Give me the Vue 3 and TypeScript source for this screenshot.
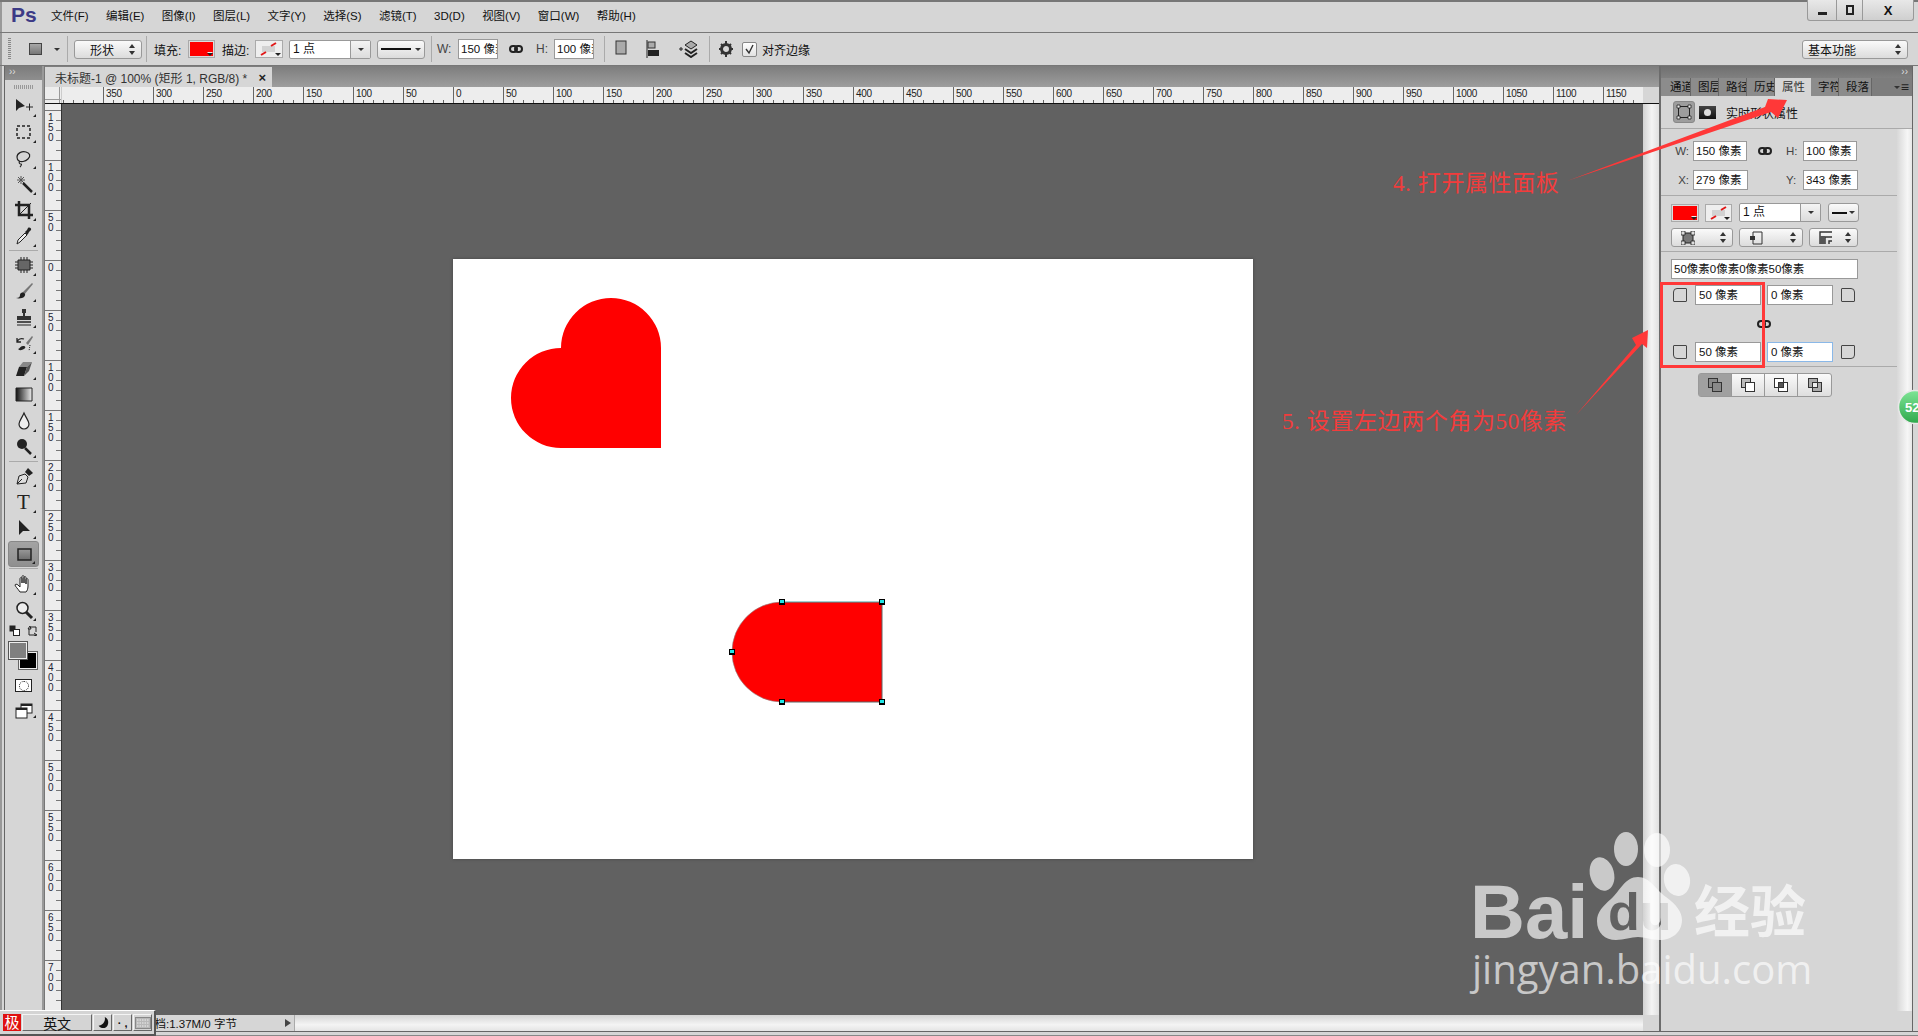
<template>
  <div class="ps">
    <!-- shared icons -->
    <svg class="defs" width="0" height="0">
      <defs>
        <linearGradient id="g-tool" x1="0" x2="1" y1="0" y2="0">
          <stop offset="0" stop-color="#111" />
          <stop offset="1" stop-color="#eee" />
        </linearGradient>
        <linearGradient id="g-shape" x1="0" x2="0" y1="0" y2="1">
          <stop offset="0" stop-color="#9a9a9a" />
          <stop offset="1" stop-color="#6c6c6c" />
        </linearGradient>
        <linearGradient id="g-ball" x1="0" x2="0" y1="0" y2="1">
          <stop offset="0" stop-color="#7fe596" />
          <stop offset="1" stop-color="#2ea84c" />
        </linearGradient>
        <mask id="du-cut">
          <rect x="1580" y="860" width="120" height="90" fill="#fff" />
          <text x="1608" y="930" class="wm-du">du</text>
        </mask>
        <symbol id="i-link" viewBox="0 0 14 10">
          <rect x="1" y="2" width="7" height="6" rx="3" fill="none" stroke="#222" stroke-width="2" />
          <rect x="6" y="2" width="7" height="6" rx="3" fill="none" stroke="#222" stroke-width="2" />
        </symbol>
        <symbol id="i-none" viewBox="0 0 20 14">
          <rect x="3" y="4" width="13" height="6" fill="#d2d2d2" />
          <path d="M2 13l5-3M12 4l5-3" stroke="#e01818" stroke-width="2" />
        </symbol>
      </defs>
    </svg>

    <header class="menubar">
      <span class="logo">Ps</span>
      <nav class="menu">
        <span v-for="m in menus" :key="m" class="menu-item">{{ m }}</span>
      </nav>
      <div class="win-btns">
        <span class="win-btn min"><i /></span>
        <span class="win-btn max"><i /></span>
        <span class="win-btn close">X</span>
      </div>
    </header>

    <div class="options">
      <span class="grip" />
      <span class="preset ml18" />
      <span class="tri ml12" />
      <span class="vsep ml7" />
      <span class="ctl sel ml6 w68"><b class="t-c">形状</b><span class="updown" /></span>
      <span class="vsep ml4" />
      <span class="lbl ml7 w30">填充:</span>
      <span class="swatch ml4 w27"><i class="red" /><span class="tri tiny" /></span>
      <span class="lbl ml7 w30">描边:</span>
      <span class="swatch ml3 w28"><svg class="none-ic"><use href="#i-none" /></svg><span class="tri tiny" /></span>
      <span class="combo ml6 w82"><b>1 点</b><span class="combo-btn"><span class="tri" /></span></span>
      <span class="ctl line-sel ml6 w48"><i class="line" /><span class="tri" /></span>
      <span class="vsep ml6" />
      <span class="lbl gray ml5 w14">W:</span>
      <span class="inp ml7 w40">150 像素</span>
      <svg class="link ml11"><use href="#i-link" /></svg>
      <span class="lbl gray ml13 w13">H:</span>
      <span class="inp ml5 w40">100 像素</span>
      <span class="vsep ml10" />
      <svg class="opt-ic ml10 w12" viewBox="0 0 12 18">
        <rect x="1" y="1" width="10" height="13" fill="#aaa" stroke="#333" />
      </svg>
      <svg class="opt-ic ml19 w15" viewBox="0 0 15 18">
        <path d="M1 0v18" stroke="#222" />
        <rect x="2" y="2" width="7" height="6" fill="#aaa" stroke="#333" />
        <rect x="2" y="10" width="11" height="6" fill="#222" />
      </svg>
      <svg class="opt-ic ml17 w20" viewBox="0 0 20 18">
        <path d="M1 9h4M3 7v4" stroke="#222" />
        <path d="M7 5l6-4 6 4-6 4z" fill="#aaa" stroke="#222" />
        <path d="M7 9l6 4 6-4M7 13l6 4 6-4" fill="none" stroke="#222" stroke-width="2" />
      </svg>
      <span class="vsep ml11" />
      <svg class="opt-ic ml8 w16" viewBox="0 0 16 18">
        <circle cx="8" cy="9" r="4.5" fill="none" stroke="#333" stroke-width="3" />
        <path d="M8 1v3M8 14v3M1 9h3M12 9h3M3 4l2 2M11 12l2 2M13 4l-2 2M5 12l-2 2" stroke="#333" stroke-width="2" />
      </svg>
      <span class="check ml8">
        <svg viewBox="0 0 13 13"><path d="M3 6l3 4 4-8" fill="none" stroke="#333" stroke-width="1.4" /></svg>
      </span>
      <span class="lbl ml5">对齐边缘</span>
      <span class="ctl sel workspace"><b>基本功能</b><span class="updown" /></span>
    </div>

    <main class="workspace-row">
      <div class="gutter" />

      <aside class="toolbar">
        <div class="tb-head"><span>››</span></div>
        <div class="tb-grip" />
        <template v-for="(group, gi) in toolGroups" :key="gi">
          <div v-if="gi > 0" class="tool-sep" :class="{ wide: gi === 3 }" />
          <div
            v-for="t in group"
            :key="t.name"
            class="tool"
            :class="{ active: t.name === 'shape' }"
          >
            <svg viewBox="0 0 20 20" width="20" height="20">
              <text v-if="t.text" x="3" y="17" class="tool-t">{{ t.text }}</text>
              <path
                v-for="(p, i) in t.p"
                :key="i"
                :d="p.d"
                :fill="p.f || 'none'"
                :stroke="p.s || 'none'"
                :stroke-width="p.w || 1"
                :stroke-dasharray="p.da"
              />
            </svg>
            <i class="corner" />
          </div>
        </template>
        <div class="swap-row">
          <svg viewBox="0 0 11 11" width="11" height="11">
            <rect x="0.5" y="0.5" width="6" height="6" fill="#222" />
            <rect x="4.5" y="4.5" width="6" height="6" fill="#fff" stroke="#222" />
          </svg>
          <svg viewBox="0 0 11 11" width="11" height="11">
            <path d="M2 4v6h7M3 1l-2 3h3zM7 8l3 2-3 1M4 2h5v5" fill="none" stroke="#222" />
          </svg>
        </div>
        <div class="colors">
          <span class="bg-c" />
          <span class="fg-c" />
        </div>
        <div class="qmask"><i /></div>
        <div class="screen-mode">
          <svg viewBox="0 0 18 16" width="18" height="16">
            <rect x="6" y="1" width="11" height="9" fill="#fff" stroke="#222" />
            <path d="M6 1h11v2H6z" fill="#222" />
            <rect x="1" y="5" width="11" height="10" fill="#fff" stroke="#222" />
            <path d="M1 5h11v2H1z" fill="#222" />
          </svg>
          <i class="corner" />
        </div>
      </aside>

      <div class="vdivider" />

      <section class="doc">
        <div class="doc-tabs">
          <div class="doc-tab">
            <span>未标题-1 @ 100% (矩形 1, RGB/8) *</span>
            <b>×</b>
          </div>
        </div>
        <div class="ruler-row">
          <div class="ruler-corner" />
          <div class="ruler-h">
            <span v-for="(l, i) in hLabels" :key="i" class="h-label">{{ l }}</span>
          </div>
          <div class="ruler-end" />
        </div>
        <div class="doc-main">
          <div class="ruler-v">
            <span v-for="(l, i) in vLabels" :key="i" class="v-label">{{ l }}</span>
          </div>
          <div class="canvas">
            <div class="sheet">
              <svg width="800" height="600" viewBox="0 0 800 600">
                <path
                  d="M108 89a50 50 0 0 1 50-50a50 50 0 0 1 50 50v100H108a50 50 0 0 1-50-50a50 50 0 0 1 50-50z"
                  fill="#f00"
                />
                <path d="M329 343h100v100H329a50 50 0 0 1 0-100z" fill="#f00" />
                <path d="M329 343h100" fill="none" stroke="#3fa3a3" />
                <path d="M429 343v100H329" fill="none" stroke="#5c6464" />
                <path d="M329 443a50 50 0 0 1 0-100" fill="none" stroke="#8a8a8a" stroke-width="0.6" />
                <g v-for="a in anchors" :key="a.x + '-' + a.y">
                  <rect :x="a.x - 3" :y="a.y - 3" width="6" height="6" fill="#000" />
                  <rect :x="a.x - 2" :y="a.y - 2" width="4" height="3" fill="#1fe6e6" />
                </g>
              </svg>
            </div>
          </div>
          <div class="vscroll" />
        </div>
        <div class="doc-status">
          <div class="status"><span>文档:1.37M/0 字节</span><i /></div>
          <div class="hscroll" />
          <div class="scroll-corner" />
        </div>
      </section>

      <div class="pdivider" />

      <aside class="panel">
        <div class="panel-head"><span>››</span></div>
        <div class="panel-tabs">
          <span v-for="t in tabs" :key="t" class="ptab" :class="{ on: t === '属性', wider: t === '段落' }">{{ t }}</span>
          <span class="ptab-menu"><i class="tri" />≡</span>
        </div>
        <div class="prop-head">
          <span class="prop-btn">
            <svg viewBox="0 0 16 16" width="16" height="16">
              <rect x="2.5" y="2.5" width="11" height="11" fill="none" stroke="#222" />
              <path d="M1 1h3v3H1zM12 1h3v3h-3zM1 12h3v3H1zM12 12h3v3h-3z" fill="#eee" stroke="#222" stroke-width="0.8" />
            </svg>
          </span>
          <span class="mask-ic"><i /></span>
          <span class="prop-title">实时形状属性</span>
        </div>
        <div class="prop-body">
          <div class="prop-main">
            <div class="geo">
              <div class="geo-row">
                <span class="g-lbl">W:</span>
                <span class="inp g-in">150 像素</span>
                <svg class="link g-link"><use href="#i-link" /></svg>
                <span class="g-lbl2">H:</span>
                <span class="inp g-in">100 像素</span>
              </div>
              <div class="geo-row">
                <span class="g-lbl">X:</span>
                <span class="inp g-in wide">279 像素</span>
                <span class="g-gap" />
                <span class="g-lbl2">Y:</span>
                <span class="inp g-in wide">343 像素</span>
              </div>
            </div>
            <div class="appear">
              <div class="ap-row">
                <span class="swatch w28"><i class="red" /><span class="tri tiny" /></span>
                <span class="swatch w27 ml6"><svg class="none-ic"><use href="#i-none" /></svg><span class="tri tiny" /></span>
                <span class="combo w82 ml7"><b>1 点</b><span class="combo-btn"><span class="tri" /></span></span>
                <span class="ctl line-sel w31 ml7"><i class="line short" /><span class="tri" /></span>
              </div>
              <div class="ap-row r2">
                <span class="ctl small-sel w62">
                  <svg viewBox="0 0 14 14" width="14" height="14"><rect x="2" y="2" width="10" height="10" fill="#777" stroke="#222" /><path d="M0 0h4v4H0zM10 0h4v4h-4zM0 10h4v4H0zM10 10h4v4h-4z" fill="#ddd" stroke="#222" stroke-width="0.8" /></svg>
                  <span class="updown" />
                </span>
                <span class="ctl small-sel w64 ml6">
                  <svg viewBox="0 0 14 14" width="14" height="14"><path d="M4 1h9v12H4" fill="none" stroke="#333" /><path d="M4 1v12" stroke="#333" /><rect x="1" y="5" width="5" height="4" fill="#333" /></svg>
                  <span class="updown" />
                </span>
                <span class="ctl small-sel w49 ml6">
                  <svg viewBox="0 0 14 14" width="14" height="14"><path d="M1 13V1h12M6 13V6h7M10 13v-3h3" fill="none" stroke="#333" stroke-width="1.4" /><rect x="1" y="5" width="5" height="8" fill="#555" /></svg>
                  <span class="updown" />
                </span>
              </div>
            </div>
            <div class="radius">
              <div class="inp all">50像素0像素0像素50像素</div>
              <div class="rad-row">
                <i class="corner-ic tl" />
                <span class="inp rad-in">50 像素</span>
                <span class="inp rad-in right">0 像素</span>
                <i class="corner-ic tr" />
              </div>
              <div class="rad-link"><svg class="link"><use href="#i-link" /></svg></div>
              <div class="rad-row">
                <i class="corner-ic bl" />
                <span class="inp rad-in">50 像素</span>
                <span class="inp rad-in right focus">0 像素</span>
                <i class="corner-ic br" />
              </div>
            </div>
            <div class="bool-row">
              <div class="bools">
                <span v-for="(b, i) in bools" :key="i" class="bool" :class="{ on: i === 0 }">
                  <svg viewBox="0 0 16 16" width="16" height="16">
                    <rect x="1.5" y="1.5" width="9" height="9" :fill="b.a" stroke="#333" />
                    <rect x="5.5" y="5.5" width="9" height="9" :fill="b.b" stroke="#333" />
                    <rect v-if="b.c" x="5.5" y="5.5" width="5" height="5" :fill="b.c" stroke="#333" />
                  </svg>
                </span>
              </div>
            </div>
          </div>
          <div class="panel-scroll" />
        </div>
      </aside>

      <div class="gutter-r" />
    </main>
    <footer class="frame-bottom" />

    <!-- annotations laid over the screenshot -->
    <svg class="overlay" width="1918" height="1036" viewBox="0 0 1918 1036">
      <path d="M1567 181L1765 107L1768 99L1787 100L1778 118L1771 112z" fill="#ff3838" />
      <path d="M1576 415L1636 345L1632 338L1648 330L1647 348L1642 344z" fill="#ff3838" />
      <rect x="1661.5" y="283.5" width="102" height="83" fill="none" stroke="#ff3838" stroke-width="3" />
      <circle cx="1915" cy="407" r="16.5" fill="url(#g-ball)" stroke="#e8e8e8" stroke-width="1.5" />
      <text x="1905" y="412" class="ball-t">52</text>
      <g class="wm">
        <text x="1470" y="938" class="wm-bai">Bai</text>
        <ellipse cx="1626" cy="849" rx="12" ry="17" />
        <ellipse cx="1657" cy="850" rx="13" ry="17" />
        <ellipse cx="1602" cy="874" rx="12" ry="17" transform="rotate(-15 1602 874)" />
        <ellipse cx="1677" cy="880" rx="13" ry="16" transform="rotate(-12 1677 880)" />
        <path
          d="M1638 877c12 0 17 12 28 20 10 7 16 15 16 23 0 13-11 20-22 20-9 0-15-3-22-3s-14 3-22 3c-11 0-19-7-19-19 0-9 6-15 14-22 9-8 14-22 27-22z"
          mask="url(#du-cut)"
        />
        <text x="1694" y="932" class="wm-cn">经验</text>
        <text x="1472" y="984" class="wm-url">jingyan.baidu.com</text>
      </g>
    </svg>
    <div class="note note-4">4. 打开属性面板</div>
    <div class="note note-5">5. 设置左边两个角为50像素</div>

    <div class="ime">
      <span class="ime-seal">极</span>
      <span class="ime-btn ime-lang">英文</span>
      <span class="ime-btn ime-ic">
        <svg viewBox="0 0 16 16" width="14" height="14"><path d="M10 1c1 4-1 9-7 10 2 3 8 4 10 0s1-8-3-10z" fill="#111" /></svg>
      </span>
      <span class="ime-btn ime-ic dots">· ,</span>
      <span class="ime-btn ime-ic">
        <svg viewBox="0 0 16 12" width="16" height="12">
          <rect x="0.5" y="0.5" width="15" height="11" fill="#b8b8b8" stroke="#888" />
          <path d="M2 3h12M2 6h12M2 9h12" stroke="#eee" stroke-dasharray="1.5 1" />
        </svg>
      </span>
    </div>
  </div>
</template>

<script setup lang="ts">
interface Stroke {
  d: string
  f?: string
  s?: string
  w?: number
  da?: string
}

interface Tool {
  name: string
  text?: string
  p: Stroke[]
}

const k = '#222'

const menus = [
  '文件(F)', '编辑(E)', '图像(I)', '图层(L)', '文字(Y)', '选择(S)',
  '滤镜(T)', '3D(D)', '视图(V)', '窗口(W)', '帮助(H)',
]

const tabs = ['通道', '图层', '路径', '历史', '属性', '字符', '段落']

const hLabels = [350, 300, 250, 200, 150, 100, 50, 0]
for (let n = 50; n <= 1150; n += 50) hLabels.push(n)

const vLabels = [150, 100, 50, 0]
for (let n = 50; n <= 700; n += 50) vLabels.push(n)

const anchors = [
  { x: 329, y: 343 },
  { x: 429, y: 343 },
  { x: 279, y: 393 },
  { x: 329, y: 443 },
  { x: 429, y: 443 },
]

const bools = [
  { a: '#8a8a8a', b: '#8a8a8a', c: '' },
  { a: '#bbb', b: '#fff', c: '' },
  { a: '#fff', b: '#fff', c: '#555' },
  { a: '#aaa', b: '#aaa', c: '#eee' },
]

const toolGroups: Tool[][] = [
  [
    { name: 'move', p: [
      { d: 'M2 3v12l3-3 6-2z', f: k },
      { d: 'M12 11h7M15.5 7.5v7', s: k },
    ] },
    { name: 'marquee', p: [{ d: 'M3 4h13v12H3z', s: k, w: 1.5, da: '3 2' }] },
    { name: 'lasso', p: [
      { d: 'M3 9c0-4 5-6 9-5s5 4 2 7-7 3-9 2-2-2-2-4z', s: k, w: 1.2 },
      { d: 'M6 13c-2 2 0 3 1 3s0 2-1 3', s: k, w: 1.2 },
    ] },
    { name: 'wand', p: [
      { d: 'M3 6h8M7 2v8M4 3l6 6M10 3l-6 6', s: '#555' },
      { d: 'M9 9l9 9', s: k, w: 2.5 },
    ] },
    { name: 'crop', p: [
      { d: 'M5 1v14h14', s: k, w: 2.5 },
      { d: 'M1 5h14v14', s: k, w: 2.5 },
      { d: 'M4 16L17 3', s: k },
    ] },
    { name: 'dropper', p: [
      { d: 'M3 18l1-4 7-7 2 2-7 7z', f: '#eee', s: k },
      { d: 'M11 6l2-2 1-2c1-1 4 0 3 2l-2 2-1 2-1 1z', f: k },
    ] },
  ],
  [
    { name: 'patch', p: [
      { d: 'M4 5h12v10H4z', f: '#666', s: k },
      { d: 'M1 7h3M1 10h3M1 13h3M16 7h3M16 10h3M16 13h3M7 2v3M10 2v3M13 2v3M7 15v3M10 15v3M13 15v3', s: k },
    ] },
    { name: 'brush', p: [
      { d: 'M8 12L18 2l1 1-9 11z', f: '#777' },
      { d: 'M2 17c3 0 4-1 4-3s2-3 4-2 1 3 0 4-5 2-8 1z', f: k },
    ] },
    { name: 'stamp', p: [
      { d: 'M8 2h4v4h-1v3h6v4H3V9h6V6H8z', f: '#333' },
      { d: 'M3 15h14', s: k, w: 1.5 },
      { d: 'M3 18h14', s: k },
    ] },
    { name: 'history', p: [
      { d: 'M12 10l6-7 1 1-5 8z', f: '#777' },
      { d: 'M4 16c2 0 2-3 5-3s3 2 1 3-4 2-6 0z', f: k },
      { d: 'M3 9c1-3 4-4 7-3M3 5v4h4', s: k, w: 1.3 },
      { d: 'M16 12l-1 6', s: k, da: '1 1' },
    ] },
    { name: 'eraser', p: [
      { d: 'M2 17l3-9h8l-3 9z', f: k },
      { d: 'M5 8l4-5h9l-5 5z', f: '#888' },
      { d: 'M13 8l5-5-3 9-5 5z', f: '#555' },
    ] },
    { name: 'gradient', p: [{ d: 'M2 3h16v13H2z', f: 'url(#g-tool)', s: k }] },
    { name: 'blur', p: [{ d: 'M10 2c2 5 5 8 5 11a5 5 0 0 1-10 0c0-3 3-6 5-11z', f: '#eee', s: k, w: 1.2 }] },
    { name: 'dodge', p: [
      { d: 'M3 7a5 5 0 1 0 10 0a5 5 0 1 0-10 0', f: k },
      { d: 'M11 11l6 6', s: k, w: 2.5 },
    ] },
  ],
  [
    { name: 'pen', p: [
      { d: 'M3 18l2-8 6-2 3 3-2 6zM3 18l5-5', f: '#ddd', s: k },
      { d: 'M11 6l3-4 5 5-4 3z', f: k },
    ] },
    { name: 'type', text: 'T', p: [] },
    { name: 'path', p: [{ d: 'M5 2v15l4-4 7 0z', f: k }] },
    { name: 'shape', p: [{ d: 'M4 5h13v11H4z', f: 'url(#g-shape)', s: k, w: 1.5 }] },
  ],
  [
    { name: 'hand', p: [
      { d: 'M6 18C4 15 1 12 1 11s2-1 3 0l2 2V5c0-2 2-2 2 0v4V3c0-2 2-2 2 0v6V4c0-2 2-2 2 0v6V6c0-2 2-2 2 0v6c0 3-1 5-2 6z', f: '#fff', s: k },
    ] },
    { name: 'zoom', p: [
      { d: 'M3 8a5.5 5.5 0 1 0 11 0a5.5 5.5 0 1 0-11 0', f: '#eee', s: k, w: 1.5 },
      { d: 'M12 12l6 6', s: k, w: 3 },
    ] },
  ],
]
</script>

<style scoped>
.ps {
  position: relative;
  width: 1918px;
  height: 1036px;
  overflow: hidden;
  display: flex;
  flex-direction: column;
  background: #d6d6d6;
  color: #111;
  font-family: "Liberation Sans", "Noto Sans CJK SC", sans-serif;
  font-size: 12px;
  box-shadow: inset 0 2px 0 #777, inset 2px 0 0 #999;
}

.defs {
  display: block;
  width: 0;
  height: 0;
}

.menubar {
  height: 32px;
  flex: none;
  display: flex;
  align-items: flex-start;
  padding-left: 11px;
  border-bottom: 1px solid #777;
}

.logo {
  width: 40px;
  margin-top: 3px;
  color: #3c3a86;
  font-size: 21px;
  font-weight: bold;
  line-height: 24px;
}

.menu {
  display: flex;
  gap: 17.4px;
  margin-top: 8px;
  font-size: 11.5px;
}

.menu-item {
  line-height: 16px;
  white-space: nowrap;
}

.win-btns {
  display: flex;
  margin-left: auto;
  margin-right: 4px;
  height: 20px;
  border: 1px solid #999;
  border-top: none;
  border-radius: 0 0 3px 3px;
  background: linear-gradient(#e8e8e8, #cfcfcf);
}

.win-btn {
  display: flex;
  align-items: center;
  justify-content: center;
  border-right: 1px solid #999;
  width: 28px;
}

.win-btn.max {
  width: 25px;
}

.win-btn.close {
  width: 50px;
  border-right: none;
  font-size: 13px;
  font-weight: bold;
}

.win-btn.min i {
  width: 9px;
  height: 3px;
  margin-top: 7px;
  background: #222;
}

.win-btn.max i {
  width: 8px;
  height: 10px;
  border: 2px solid #222;
  box-sizing: border-box;
}

.options {
  height: 33px;
  flex: none;
  box-sizing: border-box;
  display: flex;
  align-items: center;
  border-bottom: 1px solid #777;
  padding-left: 8px;
}

.grip {
  width: 3px;
  height: 22px;
  background: repeating-linear-gradient(#888 0 1px, transparent 1px 2px);
}

.preset {
  width: 13px;
  height: 12px;
  border: 1px solid #444;
  box-sizing: border-box;
  background: linear-gradient(#a8a8a8, #777);
}

.tri {
  display: inline-block;
  width: 0;
  height: 0;
  border-left: 3px solid transparent;
  border-right: 3px solid transparent;
  border-top: 3px solid #333;
}

.vsep {
  flex: none;
  width: 1px;
  height: 26px;
  background: #aaa;
}

.ml3 { margin-left: 3px; }
.ml4 { margin-left: 4px; }
.ml5 { margin-left: 5px; }
.ml6 { margin-left: 6px; }
.ml7 { margin-left: 7px; }
.ml8 { margin-left: 8px; }
.ml10 { margin-left: 10px; }
.ml11 { margin-left: 11px; }
.ml12 { margin-left: 12px; }
.ml13 { margin-left: 13px; }
.ml17 { margin-left: 17px; }
.ml18 { margin-left: 18px; }
.ml19 { margin-left: 19px; }

.w12 { width: 12px; }
.w13 { width: 13px; }
.w14 { width: 14px; }
.w15 { width: 15px; }
.w16 { width: 16px; }
.w20 { width: 20px; }
.w27 { width: 27px; }
.w28 { width: 28px; }
.w30 { width: 30px; }
.w31 { width: 31px; }
.w40 { width: 40px; }
.w48 { width: 48px; }
.w49 { width: 49px; }
.w62 { width: 62px; }
.w64 { width: 64px; }
.w68 { width: 68px; }
.w82 { width: 82px; }

.ctl {
  flex: none;
  box-sizing: border-box;
  height: 19px;
  display: flex;
  align-items: center;
  border: 1px solid #999;
  border-radius: 3px;
  background: linear-gradient(#fafafa, #dcdcdc);
}

.sel b {
  flex: 1;
  padding-left: 5px;
  font-weight: normal;
}

.sel b.t-c {
  text-align: center;
  padding-right: 5px;
}

.updown {
  position: relative;
  width: 7px;
  height: 11px;
  margin-right: 5px;
  flex: none;
}

.updown::before,
.updown::after {
  content: "";
  position: absolute;
  left: 0;
  border-left: 3px solid transparent;
  border-right: 3px solid transparent;
}

.updown::before {
  top: 0;
  border-bottom: 4px solid #333;
}

.updown::after {
  bottom: 0;
  border-top: 4px solid #333;
}

.lbl {
  flex: none;
  white-space: nowrap;
}

.lbl.gray {
  color: #444;
}

.swatch {
  position: relative;
  flex: none;
  box-sizing: border-box;
  height: 18px;
  display: flex;
  align-items: center;
  justify-content: center;
  border: 1px solid #aaa;
  background: #eee;
}

.swatch .red {
  width: 100%;
  height: 100%;
  border: 1px solid #ddd;
  box-sizing: border-box;
  background: #f00;
}

.none-ic {
  width: 20px;
  height: 14px;
}

.tri.tiny {
  position: absolute;
  right: 1px;
  bottom: 1px;
  border-top-color: #222;
  filter: drop-shadow(0 -1px 0 #eee);
}

.combo {
  flex: none;
  box-sizing: border-box;
  height: 19px;
  display: flex;
  border: 1px solid #999;
  border-radius: 2px;
  background: #fff;
}

.combo b {
  flex: 1;
  padding-left: 3px;
  font-weight: normal;
  font-size: 12px;
  line-height: 17px;
}

.combo-btn {
  width: 19px;
  display: flex;
  align-items: center;
  justify-content: center;
  border-left: 1px solid #999;
  background: linear-gradient(#f4f4f4, #dcdcdc);
}

.line-sel {
  justify-content: space-between;
  padding: 0 3px 0 3px;
}

.line {
  width: 30px;
  height: 2px;
  background: #111;
}

.line.short {
  width: 15px;
}

.inp {
  flex: none;
  box-sizing: border-box;
  height: 20px;
  padding-left: 2px;
  overflow: hidden;
  white-space: nowrap;
  border: 1px solid #999;
  background: #fff;
  line-height: 18px;
  font-size: 11.5px;
}

.link {
  flex: none;
  width: 14px;
  height: 10px;
}

.opt-ic {
  flex: none;
  height: 18px;
}

.check {
  flex: none;
  width: 13px;
  height: 13px;
  border: 1px solid #888;
  border-radius: 2px;
  background: linear-gradient(#fff, #e2e2e2);
}

.check svg {
  display: block;
}

.workspace {
  width: 106px;
  margin-left: auto;
  margin-right: 10px;
}

.workspace-row {
  flex: 1;
  min-height: 0;
  display: flex;
}

.gutter {
  width: 5px;
  flex: none;
  box-sizing: border-box;
  border-right: 1px solid #666;
}

.toolbar {
  width: 37px;
  flex: none;
  display: flex;
  flex-direction: column;
  align-items: center;
}

.tb-head {
  width: 100%;
  height: 14px;
  flex: none;
  background: linear-gradient(#7c7c7c, #8e8e8e);
  color: #ddd;
  font-size: 10px;
  line-height: 12px;
  padding-left: 4px;
  box-sizing: border-box;
}

.tb-grip {
  width: 20px;
  height: 13px;
  flex: none;
  background: repeating-linear-gradient(90deg, #999 0 1px, transparent 1px 2px) center / 100% 4px no-repeat;
}

.tool {
  position: relative;
  width: 31px;
  height: 26px;
  flex: none;
  display: flex;
  align-items: center;
  justify-content: center;
  box-sizing: border-box;
}

.tool.active {
  border-radius: 3px;
  border: 1px solid #888;
  background: linear-gradient(#a3a3a3, #8f8f8f);
}

.tool-t {
  font-family: "Liberation Serif", serif;
  font-size: 21px;
  fill: #222;
}

.corner {
  position: absolute;
  right: 3px;
  bottom: 2px;
  width: 0;
  height: 0;
  border-left: 3px solid transparent;
  border-bottom: 3px solid #222;
}

.tool-sep {
  width: 29px;
  height: 3px;
  flex: none;
  background: linear-gradient(transparent 1px, #aaa 1px, #aaa 2px, transparent 2px);
}

.tool-sep.wide {
  height: 4px;
}

.swap-row {
  width: 29px;
  margin-top: 2px;
  display: flex;
  justify-content: space-between;
}

.colors {
  position: relative;
  width: 30px;
  height: 29px;
  margin-top: 5px;
  margin-right: 1px;
  flex: none;
}

.fg-c,
.bg-c {
  position: absolute;
  width: 20px;
  height: 19px;
  box-sizing: border-box;
  border: 1px solid #666;
  outline: 1px solid #eee;
  outline-offset: -2px;
}

.fg-c {
  left: 0;
  top: 0;
  background: #808080;
  border-color: #555;
}

.bg-c {
  right: 0;
  bottom: 0;
  background: #000;
}

.qmask {
  width: 17px;
  height: 13px;
  margin-top: 9px;
  flex: none;
  display: flex;
  align-items: center;
  justify-content: center;
  background: #fff;
  border: 1px solid #222;
  box-sizing: border-box;
}

.qmask i {
  width: 8px;
  height: 8px;
  border-radius: 50%;
  border: 1px dotted #222;
}

.screen-mode {
  position: relative;
  width: 31px;
  height: 18px;
  margin-top: 10px;
  flex: none;
  display: flex;
  align-items: center;
  justify-content: center;
}

.vdivider {
  width: 3px;
  flex: none;
  background: #9a9a9a;
  border-right: 1px solid #777;
  box-sizing: border-box;
}

.doc {
  flex: 1;
  min-width: 0;
  display: flex;
  flex-direction: column;
}

.doc-tabs {
  height: 21px;
  flex: none;
  background: linear-gradient(#7d7d7d, #9d9d9d);
  display: flex;
  align-items: flex-end;
}

.doc-tab {
  width: 227px;
  height: 20px;
  box-sizing: border-box;
  display: flex;
  align-items: center;
  justify-content: space-between;
  padding: 0 6px 0 10px;
  background: #d6d6d6;
  white-space: nowrap;
  font-size: 12px;
  color: #333;
}

.doc-tab b {
  font-size: 13px;
  color: #222;
}

.ruler-row {
  height: 17px;
  flex: none;
  display: flex;
  background: #ededed;
  border-bottom: 1px solid #111;
  box-sizing: border-box;
}

.ruler-corner {
  width: 17px;
  flex: none;
  border-right: 1px solid #ccc;
  box-sizing: border-box;
  background:
    linear-gradient(90deg, transparent 14px, #999 14px, #999 15px, transparent 15px),
    linear-gradient(transparent 12px, #999 12px, #999 13px, transparent 13px);
}

.ruler-h {
  flex: 1;
  min-width: 0;
  display: flex;
  overflow: hidden;
  padding-left: 41px;
  background-color: #ededed;
  background-image:
    linear-gradient(90deg, #666 1px, transparent 1px),
    linear-gradient(90deg, #666 1px, transparent 1px);
  background-size: 50px 100%, 10px 3px;
  background-position: 41px 0, 1px bottom;
  background-repeat: repeat-x;
}

.ruler-end {
  width: 16px;
  flex: none;
  background: #d6d6d6;
}

.h-label {
  flex: none;
  width: 50px;
  box-sizing: border-box;
  padding-left: 3px;
  font-size: 10px;
  line-height: 14px;
  letter-spacing: -0.3px;
  color: #222;
}

.doc-main {
  flex: 1;
  min-height: 0;
  display: flex;
}

.ruler-v {
  width: 17px;
  flex: none;
  box-sizing: border-box;
  overflow: hidden;
  padding-top: 9px;
  border-right: 1px solid #333;
  background-color: #ededed;
  background-image:
    linear-gradient(#777 1px, transparent 1px),
    linear-gradient(#777 1px, transparent 1px);
  background-size: 100% 50px, 5px 10px;
  background-position: 0 6px, right 6px;
  background-repeat: repeat-y;
}

.v-label {
  display: block;
  width: 7px;
  height: 50px;
  margin-left: 3px;
  word-break: break-all;
  font-size: 10px;
  line-height: 10px;
  color: #223;
}

.canvas {
  position: relative;
  flex: 1;
  min-width: 0;
  background: #616161;
}

.sheet {
  position: absolute;
  left: 391px;
  top: 155px;
  width: 800px;
  height: 600px;
  background: #fff;
  box-shadow: 0 0 3px #444;
}

.sheet svg {
  display: block;
  overflow: visible;
}

.vscroll {
  width: 16px;
  flex: none;
  background: linear-gradient(90deg, #d2d2d2, #f4f4f4 55%, #e0e0e0);
}

.doc-status {
  height: 16px;
  flex: none;
  display: flex;
}

.status {
  width: 250px;
  flex: none;
  box-sizing: border-box;
  display: flex;
  align-items: center;
  justify-content: space-between;
  padding: 0 3px 0 98px;
  border-right: 1px solid #aaa;
  background: #d6d6d6;
  font-size: 11.5px;
}

.status i {
  width: 0;
  height: 0;
  border-top: 4px solid transparent;
  border-bottom: 4px solid transparent;
  border-left: 6px solid #444;
}

.hscroll {
  flex: 1;
  background: linear-gradient(#d4d4d4, #f4f4f4 60%, #e4e4e4);
}

.scroll-corner {
  width: 16px;
  flex: none;
  background: #d6d6d6;
}

.pdivider {
  width: 2px;
  flex: none;
  background: #6c6c6c;
}

.panel {
  width: 252px;
  flex: none;
  display: flex;
  flex-direction: column;
  border-right: 1px solid #666;
  box-sizing: border-box;
}

.panel-head {
  height: 12px;
  flex: none;
  text-align: right;
  padding-right: 4px;
  color: #ddd;
  font-size: 10px;
  line-height: 12px;
  background: linear-gradient(#6f6f6f, #808080);
}

.panel-tabs {
  height: 18px;
  flex: none;
  display: flex;
  background: #7d7d7d;
}

.ptab {
  width: 28px;
  box-sizing: border-box;
  overflow: hidden;
  padding-left: 7px;
  white-space: nowrap;
  font-size: 11.5px;
  line-height: 18px;
  color: #111;
  border-right: 1px solid #666;
  background: #8c8c8c;
}

.ptab:first-child {
  width: 30px;
  padding-left: 9px;
}

.ptab.on {
  width: 36px;
  background: #d6d6d6;
  color: #333;
  border-right: none;
}

.ptab.wider {
  width: 33px;
}

.ptab-menu {
  margin-left: auto;
  padding-right: 3px;
  display: flex;
  align-items: center;
  gap: 1px;
  font-size: 14px;
  line-height: 18px;
  color: #222;
}

.prop-head {
  height: 33px;
  flex: none;
  box-sizing: border-box;
  display: flex;
  align-items: center;
  padding-left: 12px;
  border-bottom: 1px solid #aaa;
}

.prop-btn {
  width: 22px;
  height: 22px;
  display: flex;
  align-items: center;
  justify-content: center;
  box-sizing: border-box;
  border: 1px solid #888;
  border-radius: 3px;
  background: #9d9d9d;
}

.mask-ic {
  width: 17px;
  height: 13px;
  margin-left: 4px;
  display: flex;
  align-items: center;
  justify-content: center;
  background: linear-gradient(#444, #111);
}

.mask-ic i {
  width: 7px;
  height: 7px;
  border-radius: 50%;
  background: #ddd;
}

.prop-title {
  margin-left: 10px;
  font-size: 12px;
  color: #111;
}

.prop-body {
  flex: 1;
  min-height: 0;
  display: flex;
}

.prop-main {
  flex: 1;
  min-width: 0;
}

.panel-scroll {
  width: 15px;
  flex: none;
  height: 882px;
  background: linear-gradient(90deg, #d8d8d8, #f6f6f6 70%, #e8e8e8);
}

.geo {
  height: 67px;
  box-sizing: border-box;
  padding-top: 12px;
  border-bottom: 1px solid #aaa;
}

.geo-row {
  display: flex;
  align-items: center;
  height: 20px;
  margin-bottom: 9px;
  font-size: 11.5px;
  color: #444;
}

.g-lbl {
  width: 32px;
  padding-right: 4px;
  box-sizing: border-box;
  text-align: right;
}

.g-in {
  width: 54px;
  color: #111;
}

.g-in.wide {
  width: 55px;
}

.g-link {
  margin-left: 11px;
}

.g-gap {
  width: 24px;
  flex: none;
}

.g-lbl2 {
  width: 17px;
  margin-left: 14px;
}

.appear {
  height: 56px;
  box-sizing: border-box;
  padding: 7px 0 0 10px;
  border-bottom: 1px solid #aaa;
}

.ap-row {
  display: flex;
  align-items: center;
  height: 19px;
}

.ap-row.r2 {
  margin-top: 6px;
}

.small-sel {
  justify-content: space-between;
  padding-left: 9px;
}

.radius {
  height: 115px;
  box-sizing: border-box;
  padding: 7px 0 0 10px;
  border-bottom: 1px solid #aaa;
}

.all {
  width: 187px;
}

.rad-row {
  display: flex;
  align-items: center;
  margin-top: 6px;
  height: 20px;
}

.rad-link {
  height: 37px;
  margin-bottom: -6px;
  padding-left: 86px;
  display: flex;
  align-items: center;
}

.rad-in {
  width: 66px;
  margin-left: 8px;
  padding-left: 3px;
}

.rad-in.right {
  margin-left: 6px;
}

.rad-in.focus {
  border-color: #8ab8e8;
}

.corner-ic {
  width: 14px;
  height: 14px;
  margin-left: 2px;
  box-sizing: border-box;
  border: 1px solid #444;
  border-radius: 1px;
  flex: none;
}

.corner-ic.tl { border-top-left-radius: 4px; }
.corner-ic.tr { border-top-right-radius: 4px; margin-left: 8px; }
.corner-ic.bl { border-bottom-left-radius: 4px; }
.corner-ic.br { border-bottom-right-radius: 4px; margin-left: 8px; }

.bool-row {
  padding: 6px 0 0 37px;
}

.bools {
  display: inline-flex;
  height: 22px;
  border: 1px solid #999;
  border-radius: 3px;
  background: linear-gradient(#fafafa, #dedede);
}

.bool {
  width: 33px;
  box-sizing: border-box;
  display: flex;
  align-items: center;
  justify-content: center;
  border-right: 1px solid #999;
}

.bool:last-child {
  border-right: none;
}

.bool.on {
  background: #a0a0a0;
}

.gutter-r {
  width: 5px;
  flex: none;
}

.frame-bottom {
  height: 5px;
  flex: none;
  border-top: 1px solid #666;
  border-bottom: 1px solid #888;
  box-sizing: border-box;
}

.overlay {
  position: absolute;
  left: 0;
  top: 0;
  pointer-events: none;
}

.wm {
  fill: #fff;
  fill-opacity: 0.66;
}

.wm-bai,
.wm-du {
  font-family: "Liberation Sans", sans-serif;
  font-weight: bold;
}

.wm-bai {
  font-size: 76px;
}

.wm-du {
  font-size: 52px;
  fill: #000;
}

.wm-cn {
  font-family: "Noto Sans CJK SC", sans-serif;
  font-size: 56px;
  font-weight: bold;
}

.wm-url {
  font-family: "Open Sans", sans-serif;
  font-size: 40px;
}

.ball-t {
  font-family: "Liberation Sans", sans-serif;
  font-size: 13px;
  font-weight: bold;
  fill: #fff;
}

.note {
  position: absolute;
  color: #f23c3c;
  font-family: "Liberation Serif", "Noto Sans CJK SC", serif;
  font-size: 23px;
  line-height: 26px;
  letter-spacing: 0.6px;
  white-space: nowrap;
}

.note-4 {
  left: 1393px;
  top: 171px;
}

.note-5 {
  left: 1282px;
  top: 409px;
}

.ime {
  position: absolute;
  left: 0;
  top: 1010px;
  width: 156px;
  height: 26px;
  box-sizing: border-box;
  display: flex;
  align-items: stretch;
  gap: 1px;
  padding: 3px 2px 3px 3px;
  background: #d4d4d4;
  border-top: 1px solid #fff;
  border-right: 2px solid #555;
  border-bottom: 2px solid #555;
}

.ime-seal {
  width: 18px;
  background: #e01010;
  color: #fff;
  font-size: 15px;
  line-height: 18px;
  text-align: center;
}

.ime-btn {
  display: flex;
  align-items: center;
  justify-content: center;
  box-sizing: border-box;
  border: 1px solid;
  border-color: #f4f4f4 #666 #666 #f4f4f4;
}

.ime-lang {
  width: 71px;
  font-size: 14px;
  color: #111;
}

.ime-ic {
  width: 19px;
}

.dots {
  font-size: 11px;
  font-weight: bold;
}
</style>

<style>
html,
body {
  margin: 0;
  background: #d6d6d6;
}
</style>
